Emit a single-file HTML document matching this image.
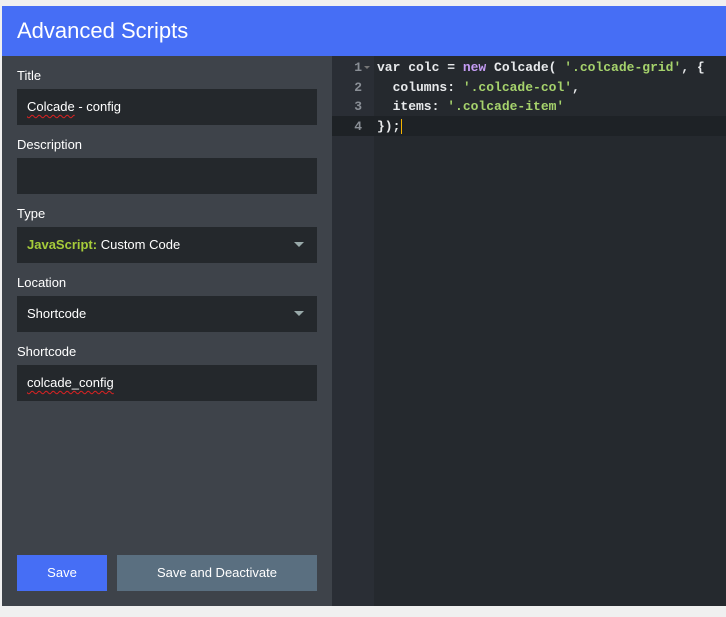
<!DOCTYPE html>
<html><head><style>
body{margin:0;background:#f0f0f0;width:726px;height:617px;overflow:hidden;font-family:"Liberation Sans",sans-serif}
.wrap{position:absolute;left:2px;top:6px;width:724px;height:600px}
.hdr{position:absolute;left:0;top:0;width:724px;height:50px;background:#466ef5;color:#fff;font-size:22px;line-height:50px;padding-left:15px;box-sizing:border-box}
.left{position:absolute;left:0;top:50px;width:330px;height:550px;background:#3e434a}
.lbl{position:absolute;left:15px;color:#fff;font-size:13px}
.inp{position:absolute;left:15px;width:300px;height:36px;background:#24282c;color:#fff;font-size:13px;line-height:36px;padding-left:10px;box-sizing:border-box}
.sq{text-decoration:underline wavy #d22;text-underline-offset:3px;text-decoration-thickness:1px}
.arr{position:absolute;right:13px;top:15px;width:0;height:0;border-left:5px solid transparent;border-right:5px solid transparent;border-top:5px solid #9aa}
.gut{position:absolute;left:330px;top:50px;width:42px;height:550px;background:#2a2e35}
.ed{position:absolute;left:372px;top:50px;width:352px;height:550px;background:#25292e}
.act{position:absolute;left:330px;top:110px;width:394px;height:20px;background:#1e2226}
.code{position:absolute;left:0;top:0;font-family:"Liberation Mono",monospace;font-size:13px;font-weight:bold;line-height:19.5px;white-space:pre;color:#e8eaec}
.ln{position:absolute;left:336px;top:52px;width:24px;text-align:right;font-family:"Liberation Mono",monospace;font-size:13px;line-height:19.5px;color:#8a8f96;font-weight:bold}
.s{color:#a6d36c}.k{color:#c59cf5}
.btn{position:absolute;top:549px;height:36px;color:#fff;font-size:13px;line-height:36px;text-align:center}
</style></head><body>
<div class="wrap">
<div class="hdr">Advanced Scripts</div>
<div class="left">
<div class="lbl" style="top:12px">Title</div>
<div class="inp" style="top:33px"><span class="sq">Colcade</span> - config</div>
<div class="lbl" style="top:81px">Description</div>
<div class="inp" style="top:102px"></div>
<div class="lbl" style="top:150px">Type</div>
<div class="inp" style="top:171px"><b style="color:#a6cc3a">JavaScript:</b> Custom Code<div class="arr"></div></div>
<div class="lbl" style="top:219px">Location</div>
<div class="inp" style="top:240px">Shortcode<div class="arr"></div></div>
<div class="lbl" style="top:288px">Shortcode</div>
<div class="inp" style="top:309px"><span class="sq">colcade_config</span></div>
</div>
<div class="gut"></div><div class="ed"></div>
<div class="act"></div>
<div class="ln">1<br>2<br>3<br>4</div>
<div style="position:absolute;left:362px;top:60px;border-left:3px solid transparent;border-right:3px solid transparent;border-top:3px solid #777"></div>
<div class="code" style="left:375px;top:52px">var colc = <span class="k">new</span> Colcade( <span class="s">'.colcade-grid'</span>, {
  columns: <span class="s">'.colcade-col'</span>,
  items: <span class="s">'.colcade-item'</span>
});<span style="border-left:1px solid #f5b400;margin-left:1px"></span></div>
<div class="btn" style="left:15px;width:90px;background:#466ef5">Save</div>
<div class="btn" style="left:115px;width:200px;background:#5a6f80">Save and Deactivate</div>
</div>
</body></html>
